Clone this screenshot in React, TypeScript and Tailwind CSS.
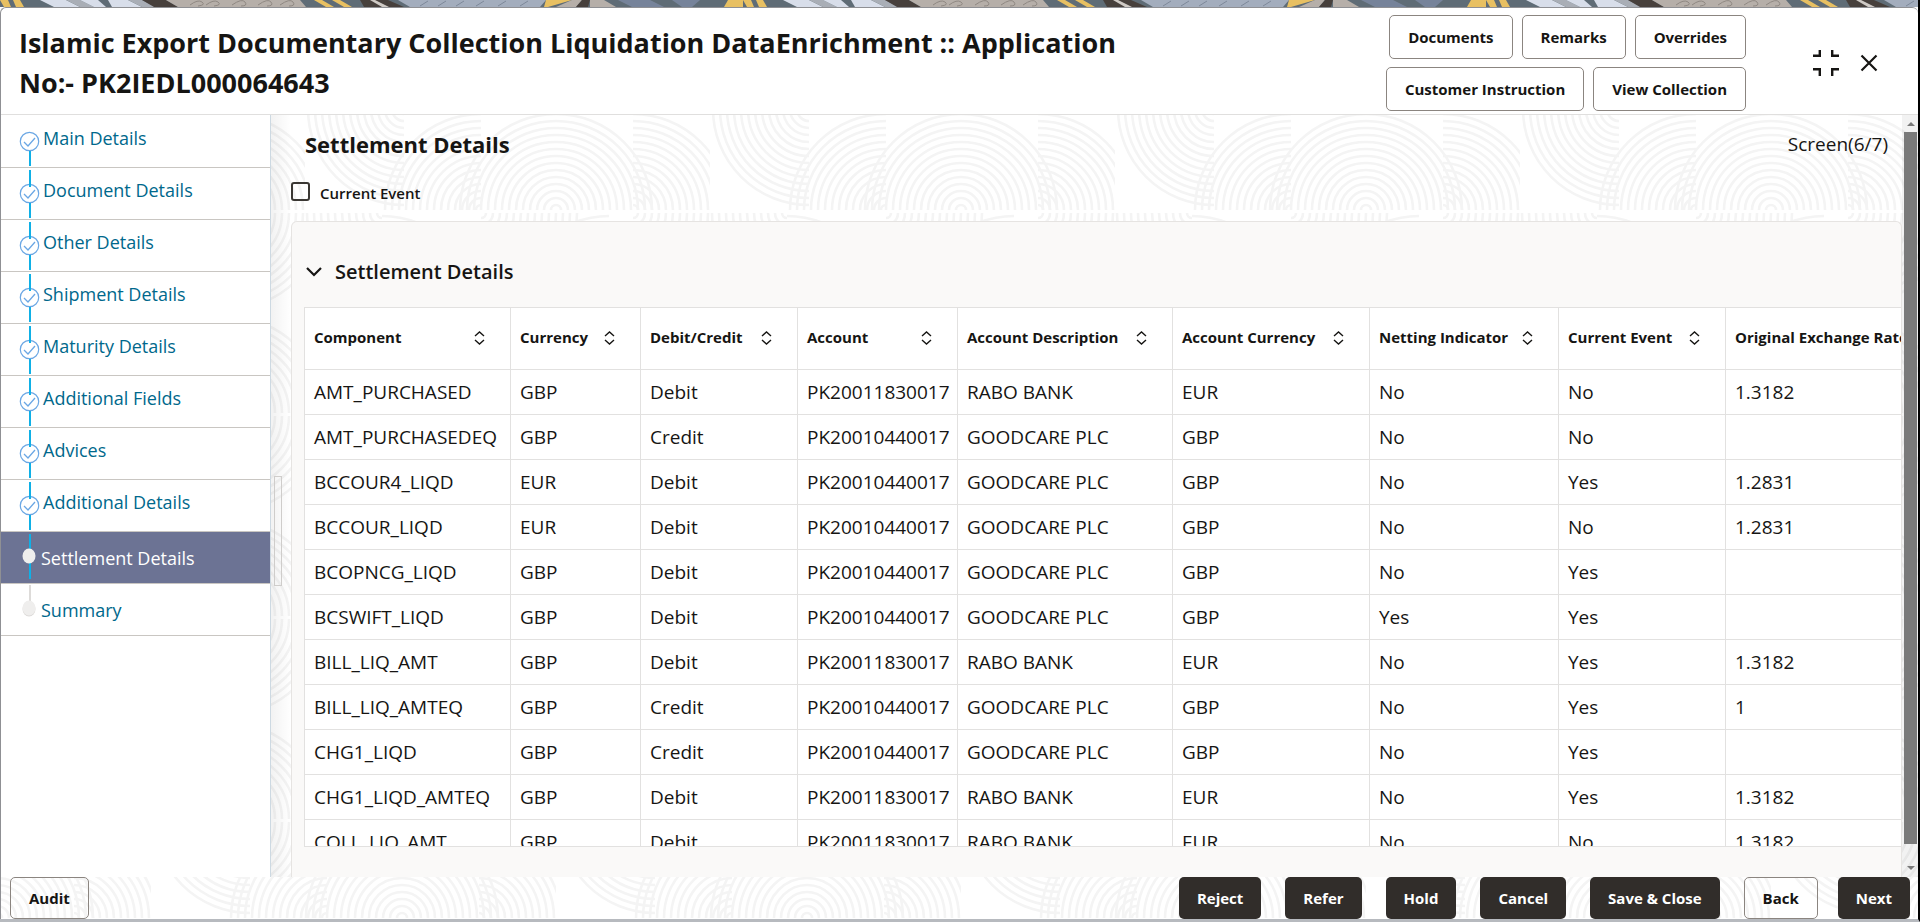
import { useState } from "react";

const steps = [
  "Main Details", "Document Details", "Other Details", "Shipment Details", "Maturity Details",
  "Additional Fields", "Advices", "Additional Details", "Settlement Details", "Summary",
];
const activeStep = 8;

const columns = [
  { label: "Component", width: "w-[206px]" },
  { label: "Currency", width: "w-[130px]" },
  { label: "Debit/Credit", width: "w-[157px]" },
  { label: "Account", width: "w-[160px]" },
  { label: "Account Description", width: "w-[215px]" },
  { label: "Account Currency", width: "w-[197px]" },
  { label: "Netting Indicator", width: "w-[189px]" },
  { label: "Current Event", width: "w-[167px]" },
  { label: "Original Exchange Rate", width: "w-[240px]" },
];

const rows = [
  ["AMT_PURCHASED", "GBP", "Debit", "PK20011830017", "RABO BANK", "EUR", "No", "No", "1.3182"],
  ["AMT_PURCHASEDEQ", "GBP", "Credit", "PK20010440017", "GOODCARE PLC", "GBP", "No", "No", ""],
  ["BCCOUR4_LIQD", "EUR", "Debit", "PK20010440017", "GOODCARE PLC", "GBP", "No", "Yes", "1.2831"],
  ["BCCOUR_LIQD", "EUR", "Debit", "PK20010440017", "GOODCARE PLC", "GBP", "No", "No", "1.2831"],
  ["BCOPNCG_LIQD", "GBP", "Debit", "PK20010440017", "GOODCARE PLC", "GBP", "No", "Yes", ""],
  ["BCSWIFT_LIQD", "GBP", "Debit", "PK20010440017", "GOODCARE PLC", "GBP", "Yes", "Yes", ""],
  ["BILL_LIQ_AMT", "GBP", "Debit", "PK20011830017", "RABO BANK", "EUR", "No", "Yes", "1.3182"],
  ["BILL_LIQ_AMTEQ", "GBP", "Credit", "PK20010440017", "GOODCARE PLC", "GBP", "No", "Yes", "1"],
  ["CHG1_LIQD", "GBP", "Credit", "PK20010440017", "GOODCARE PLC", "GBP", "No", "Yes", ""],
  ["CHG1_LIQD_AMTEQ", "GBP", "Debit", "PK20011830017", "RABO BANK", "EUR", "No", "Yes", "1.3182"],
  ["COLL_LIQ_AMT", "GBP", "Debit", "PK20011830017", "RABO BANK", "EUR", "No", "No", "1.3182"],
];

// quarter circles around one centre, dx/dy tell which quadrant they open to
function arcs(cx: number, cy: number, dx: number, dy: number) {
  let d = "";
  for (let r = 5; r <= 100; r += 7) {
    const sweep = dx * dy > 0 ? 1 : 0;
    d += `M${cx + dx * r} ${cy}A${r} ${r} 0 0 ${sweep} ${cx} ${cy + dy * r}`;
  }
  return d;
}

function Texture({ id, x, y }: { id: string; x: number; y: number }) {
  return (
    <svg className="absolute inset-0 w-full h-full" aria-hidden="true">
      <defs>
        <pattern id={id} x={x} y={y} width="405" height="203" patternUnits="userSpaceOnUse">
          <g fill="none" stroke="#f4f4f4" strokeWidth="2.6">
            <path d={arcs(251, 101, -1, -1)} />
            <path d={arcs(251, 101, 1, -1)} />
            <path d={arcs(176, 101, -1, -1)} />
            <path d={arcs(328, 101, 1, -1)} />
            <path d={arcs(99, 0, -1, 1)} />
            <path d={arcs(176, 104, 1, 1)} />
            <path d={arcs(304, 203, -1, -1)} />
            <path d={arcs(328, 104, 1, 1)} />
            <path d={arcs(77, 104, -1, 1)} />
            <path d={arcs(77, 203, 1, -1)} />
          </g>
        </pattern>
      </defs>
      <rect width="100%" height="100%" fill={`url(#${id})`} />
    </svg>
  );
}

function Banner() {
  return (
    <svg className="block w-full h-[7px] shrink-0" aria-hidden="true">
      <defs>
        <pattern id="banner" width="743" height="7" patternUnits="userSpaceOnUse">
          <rect width="743" height="7" fill="#5f6c76" />
          <path d="M0 0H20L24 7H4Z" fill="#e8c062" />
          <path d="M8 0h5l3 7h-5z" fill="#5f6c76" />
          <path d="M40 0H66L80 7H54Z" fill="#d8deea" />
          <path d="M66 0H80L94 7H80Z" fill="#a9aeb6" />
          <path d="M80 0H98L106 7H94Z" fill="#d8deea" />
          <path d="M108 0H128L142 7H112Z" fill="#d8deea" />
          <path d="M128 0H142L156 7H142Z" fill="#a9aeb6" />
          <path d="M142 0H166L178 7H154Z" fill="#47403c" />
          <path d="M166 0H300L306 7H178Z" fill="#b6afa9" />
          <path d="M190 5q8-6 12-3t-4 4M206 5q8-6 12-3t-4 4M232 5q10-7 13-3t-4 4M258 5q10-7 13-3t-4 4M280 5q10-7 13-3t-4 4" fill="none" stroke="#8f8882" />
          <path d="M314 0H322L334 7H326Z" fill="#e8c062" />
          <path d="M332 0H340L352 7H344Z" fill="#e8c062" />
          <path d="M360 0H388L404 7H364Z" fill="#47403c" />
          <path d="M370 0H375L389 7H382Z" fill="#cfcac5" />
          <path d="M398 0H546L540 7H410Z" fill="#a3adbd" />
          <path d="M420 6l8-5M438 6l8-5M456 6l8-5M476 6l8-5M498 6l8-5M520 6l8-5" stroke="#7d8899" />
          <path d="M546 0H572L548 7H544Z" fill="#e8c062" />
          <path d="M572 0H582L576 7H556Z" fill="#b6afa9" />
          <path d="M582 0H590L588 7H576Z" fill="#47403c" />
          <path d="M590 0H604L616 7H590Z" fill="#b6afa9" />
          <path d="M618 0H650L664 7H632Z" fill="#76839a" />
          <path d="M672 0H700L692 7H682Z" fill="#76839a" />
          <path d="M728 0H743V7H724Z" fill="#e8c062" />
        </pattern>
      </defs>
      <rect width="100%" height="7" fill="url(#banner)" />
    </svg>
  );
}

function StepMark({ index }: { index: number }) {
  const done = index < activeStep;
  if (!done) {
    return (
      <svg width="40" height="51" className="shrink-0" aria-hidden="true">
        <path d={index === activeStep ? "M29 2V47" : "M29 1V18"} stroke={index === activeStep ? "#0fb0e6" : "#dddbd9"} strokeWidth="2" />
        {index !== activeStep && <ellipse cx="28" cy="25" rx="6.5" ry="7.5" fill="#dcdad8" />}
        <ellipse cx="28" cy="24" rx="6.5" ry="7.5" fill="#efeeed" />
      </svg>
    );
  }
  return (
    <svg width="42" height="51" className="shrink-0" aria-hidden="true">
      <circle cx="28.5" cy="25.5" r="9.2" fill="#fff" stroke="#6ba7e4" strokeWidth="1.2" />
      <path d="M23 26l4 4 7-8" fill="none" stroke="#6ba7e4" strokeWidth="1.3" />
      <path d={index === 0 ? "M29 35V50" : "M29 2V19M29 35V50"} stroke="#0fb0e6" strokeWidth="2" />
    </svg>
  );
}

function SortIcon() {
  return (
    <svg width="11" height="14" viewBox="0 0 11 14" fill="none" stroke="#161513" strokeWidth="1.4" aria-hidden="true">
      <path d="M1 5l4.5-4L10 5M1 9l4.5 4L10 9" />
    </svg>
  );
}

const outlineBtn = "h-11 px-[18px] border border-[#8b8580] rounded-[5px] bg-white text-[15px] font-bold cursor-pointer";
const footerBtn = "h-[42px] px-[18px] border border-[#8b8580] rounded-[5px] text-[15px] font-bold cursor-pointer";
const darkBtn = "h-[42px] px-[18px] rounded-[5px] bg-[#312d2a] text-white text-[15px] font-bold cursor-pointer";

export default function App() {
  const [currentEvent, setCurrentEvent] = useState<boolean>(false);
  const [open, setOpen] = useState<boolean>(true);

  return (
    <div className="h-screen flex flex-col overflow-hidden bg-white text-[#161513] border-r-2 border-r-black border-b-[3px] border-b-[#b7babf] font-['Open_Sans','Noto_Sans',sans-serif]">
      <Banner />
      <div className="flex-1 min-h-0 flex flex-col border-t border-l border-[#8f9094] rounded-t-md">
        {/* title bar */}
        <header className="flex items-start justify-between border-b border-[#e0dfde] pl-[18px] pt-[7px] pb-[3px]">
          <h1 className="pt-2 max-w-[1150px] text-[27px] leading-10 font-bold">
            Islamic Export Documentary Collection Liquidation DataEnrichment :: Application No:- PK2IEDL000064643
          </h1>
          <div className="flex items-center self-stretch">
            <div className="flex flex-wrap justify-end gap-x-[9px] gap-y-2 w-[370px] shrink-0">
              <button className={outlineBtn}>Documents</button>
              <button className={outlineBtn}>Remarks</button>
              <button className={outlineBtn}>Overrides</button>
              <button className={outlineBtn}>Customer Instruction</button>
              <button className={outlineBtn}>View Collection</button>
            </div>
            <button aria-label="Collapse" className="ml-[66px] cursor-pointer">
              <svg width="28" height="28" viewBox="0 0 28 28" fill="none" stroke="#161513" strokeWidth="2.4">
                <path d="M1 6.8H7.8V1M20.2 1V6.8H27M1 20.2H7.8V27M20.2 27V20.2H27" />
              </svg>
            </button>
            <button aria-label="Close" className="ml-5 mr-10 cursor-pointer">
              <svg width="18" height="18" viewBox="0 0 18 18" stroke="#161513" strokeWidth="2.2">
                <path d="M1.5 1.5l15 15M16.5 1.5l-15 15" />
              </svg>
            </button>
          </div>
        </header>

        <div className="flex-1 min-h-0 flex">
          {/* steps */}
          <nav className="w-[270px] shrink-0 border-r border-[#cdd9e2] pt-px">
            <ol>
              {steps.map((step, i) => (
                <li key={step} className={`border-b border-[#c9c6c2] ${i === activeStep ? "bg-[#6c7394] text-white" : "text-[#00688c]"}`}>
                  <a href="#" className="flex h-[51px] text-lg">
                    <StepMark index={i} />
                    <span className={i < activeStep ? "leading-[44px]" : "leading-[52px]"}>{step}</span>
                  </a>
                </li>
              ))}
            </ol>
          </nav>

          <main className="relative flex-1 min-w-0 flex overflow-hidden">
            <Texture id="waves" x={34} y={-6} />
            <div className="relative w-5 shrink-0 flex items-center pl-[3px] bg-gradient-to-r from-black/5 to-transparent">
              <div className="w-[8px] h-[110px] mt-[70px] border border-[#cfcdcb]" />
            </div>
            <div className="relative flex-1 min-w-0 flex flex-col">
              <div className="h-[60px] pb-0.5 flex items-center justify-between pl-[14px] pr-[14px]">
                <h2 className="text-[22px] font-bold">Settlement Details</h2>
                <span className="text-[19px]">Screen(6/7)</span>
              </div>
              <div className="h-[46px] pb-3.5 flex items-center">
                <input
                  id="currentEvent"
                  type="checkbox"
                  checked={currentEvent}
                  onChange={(e) => setCurrentEvent(e.target.checked)}
                  className="appearance-none w-[19px] h-[19px] rounded-[3px] border-2 border-[#3a3733] checked:bg-[#3a3733]" />
                <label htmlFor="currentEvent" className="pl-[10px] pt-1 text-[15px] font-semibold">Current Event</label>
              </div>

              <section className="flex-1 min-h-0 flex flex-col border border-b-0 border-[#e6e4e2] rounded-t-md bg-[#faf9f8] pb-[30px]">
                <div className="h-[85px] shrink-0 pt-[15px] pl-[14px] flex items-center">
                  <button onClick={() => setOpen(!open)} aria-expanded={open} className="flex items-center gap-[13px] cursor-pointer text-xl font-semibold">
                    <svg width="16" height="10" viewBox="0 0 16 10" fill="none" stroke="#161513" strokeWidth="2.2" aria-hidden="true">
                      <path d="M1 1l7 7 7-7" />
                    </svg>
                    Settlement Details
                  </button>
                </div>
                {open && (
                  <div className="flex-1 min-h-0 ml-3 overflow-hidden border border-r-0 border-[#e2e1e0] bg-white">
                    <table className="table-fixed w-[1661px] border-separate border-spacing-0 text-left">
                      <thead>
                        <tr>
                          {columns.map((c) => (
                            <th key={c.label} className={`${c.width} h-[62px] pt-0 pb-0.5 pl-[9px] pr-[25px] border-b border-r border-[#e2e1e0] text-[15px] font-bold whitespace-nowrap`}>
                              <div className="flex items-center justify-between">
                                {c.label}
                                <SortIcon />
                              </div>
                            </th>
                          ))}
                        </tr>
                      </thead>
                      <tbody>
                        {rows.map((row) => (
                          <tr key={row[0]}>
                            {row.map((cell, i) => (
                              <td key={i} className="h-[45px] p-0 pl-[9px] border-b border-r border-[#e2e1e0] text-[19px] leading-7 whitespace-nowrap">{cell}</td>
                            ))}
                          </tr>
                        ))}
                      </tbody>
                    </table>
                  </div>
                )}
              </section>
            </div>

            {/* scroll bar */}
            <div className="relative w-4 shrink-0 flex flex-col items-center bg-black/5 pl-px">
              <svg width="8" height="17" className="shrink-0" aria-hidden="true"><path d="M0 11l4-4 4 4z" fill="#7a7a7a" /></svg>
              <div className="w-[13px] flex-1 bg-[#7a7a7a] mb-4" />
              <svg width="8" height="17" className="shrink-0" aria-hidden="true"><path d="M0 6l4 4 4-4z" fill="#7a7a7a" /></svg>
            </div>
          </main>
        </div>

        {/* actions */}
        <footer className="relative shrink-0 bg-white">
          <Texture id="waves-footer" x={150} y={-60} />
          <div className="relative flex items-center justify-between pl-[9px] pr-2">
            <button className={footerBtn}>Audit</button>
            <div className="flex gap-6">
              <button className={darkBtn}>Reject</button>
              <button className={darkBtn}>Refer</button>
              <button className={darkBtn}>Hold</button>
              <button className={darkBtn}>Cancel</button>
              <button className={darkBtn}>Save &amp; Close</button>
              <div className="flex gap-5">
                <button className={footerBtn}>Back</button>
                <button className={darkBtn}>Next</button>
              </div>
            </div>
          </div>
        </footer>
      </div>
    </div>
  );
}
